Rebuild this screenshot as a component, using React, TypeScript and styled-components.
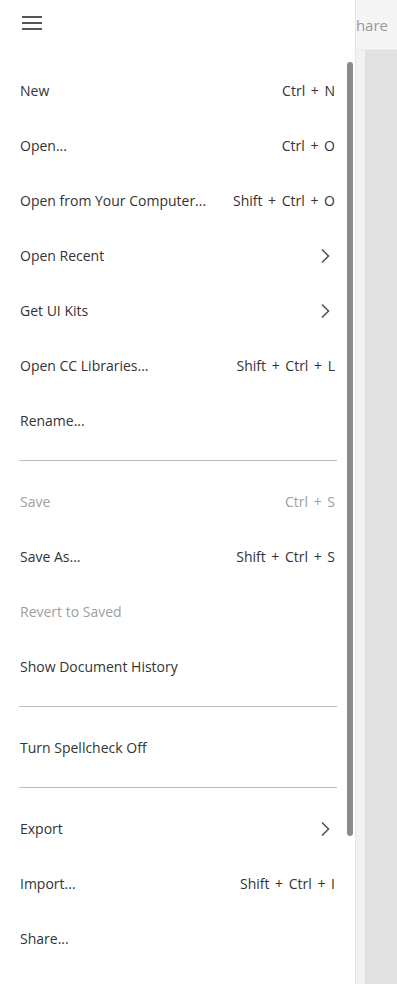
import styled, { createGlobalStyle } from "styled-components";

const GlobalStyle = createGlobalStyle`
  html, body {
    margin: 0;
    padding: 0;
  }
  body {
    font-family: "Open Sans", "Noto Sans", sans-serif;
    color: #333;
    overflow: hidden;
  }
`;

const Page = styled.div`
  display: flex;
  flex-direction: column;
  height: 984px;
  width: 397px;
  background-color: #e2e2e2;
`;

const TopBar = styled.div`
  height: 50px;
  display: flex;
  align-items: center;
  justify-content: flex-end;
  background-color: #f5f5f5;
  border-bottom: 1px solid #ececec;
  box-sizing: border-box;
`;

const ShareButton = styled.span`
  font-size: 15px;
  color: #9a9a9a;
  padding-right: 9px;
  margin-top: 1px;
`;

const Workspace = styled.div`
  flex: 1;
  display: flex;
`;

const ToolPanel = styled.div`
  width: 365px;
  background-color: #f2f2f2;
`;

const Stage = styled.div`
  flex: 1;
  background-color: #e1e1e1;
`;

const Drawer = styled.nav`
  position: fixed;
  top: 0;
  left: 0;
  width: 356px;
  height: 984px;
  box-sizing: border-box;
  background-color: #fff;
  border-right: 1px solid #e4e4e4;
  display: flex;
  flex-direction: column;
`;

const DrawerHeader = styled.div`
  height: 48px;
  display: flex;
  align-items: center;
  padding-left: 22px;
  svg {
    width: 20px;
    height: 20px;
    color: #555;
  }
`;

const MenuList = styled.div`
  position: relative;
  flex: 1;
  padding-top: 15px;
  overflow: hidden;
`;

const ScrollThumb = styled.div`
  position: absolute;
  right: 2px;
  top: 14px;
  width: 6px;
  height: 774px;
  border-radius: 3px;
  background-color: #8c8c8c;
`;

const Item = styled.div<{ $disabled?: boolean }>`
  height: 55px;
  display: flex;
  align-items: center;
  justify-content: space-between;
  padding: 0 20px;
  font-size: 14px;
  color: ${(p) => (p.$disabled ? "#a0a0a0" : "#333")};
  cursor: ${(p) => (p.$disabled ? "default" : "pointer")};
  svg {
    width: 10px;
    height: 16px;
    margin-right: 5px;
    color: #555;
  }
`;

const Shortcut = styled.span`
  white-space: nowrap;
  word-spacing: 2px;
`;

const Divider = styled.hr`
  border: none;
  border-top: 1px solid #bdbdbd;
  margin: 12px 18px 13px 19px;
  height: 0;
`;

const Chevron = () => (
  <svg viewBox="0 0 10 16" fill="none" stroke="currentColor" strokeWidth="1.6">
    <path d="M2 1.5 8.5 8 2 14.5" />
  </svg>
);

type Entry =
  | { label: string; keys?: string; sub?: boolean; disabled?: boolean }
  | "divider";

const entries: Entry[] = [
  { label: "New", keys: "Ctrl + N" },
  { label: "Open...", keys: "Ctrl + O" },
  { label: "Open from Your Computer...", keys: "Shift + Ctrl + O" },
  { label: "Open Recent", sub: true },
  { label: "Get UI Kits", sub: true },
  { label: "Open CC Libraries...", keys: "Shift + Ctrl + L" },
  { label: "Rename..." },
  "divider",
  { label: "Save", keys: "Ctrl + S", disabled: true },
  { label: "Save As...", keys: "Shift + Ctrl + S" },
  { label: "Revert to Saved", disabled: true },
  { label: "Show Document History" },
  "divider",
  { label: "Turn Spellcheck Off" },
  "divider",
  { label: "Export", sub: true },
  { label: "Import...", keys: "Shift + Ctrl + I" },
  { label: "Share..." },
];

export default function App() {
  return (
    <>
      <GlobalStyle />
      <Page>
        <TopBar>
          <ShareButton>Share</ShareButton>
        </TopBar>
        <Workspace>
          <ToolPanel />
          <Stage />
        </Workspace>
      </Page>
      <Drawer>
        <DrawerHeader>
          <svg viewBox="0 0 20 20" fill="currentColor">
            <rect x="0" y="2" width="20" height="2" />
            <rect x="0" y="8" width="20" height="2" />
            <rect x="0" y="14" width="20" height="2" />
          </svg>
        </DrawerHeader>
        <MenuList>
          {entries.map((e, i) =>
            e === "divider" ? (
              <Divider key={i} />
            ) : (
              <Item key={i} $disabled={e.disabled}>
                <span>{e.label}</span>
                {e.keys && <Shortcut>{e.keys}</Shortcut>}
                {e.sub && <Chevron />}
              </Item>
            )
          )}
          <ScrollThumb />
        </MenuList>
      </Drawer>
    </>
  );
}
